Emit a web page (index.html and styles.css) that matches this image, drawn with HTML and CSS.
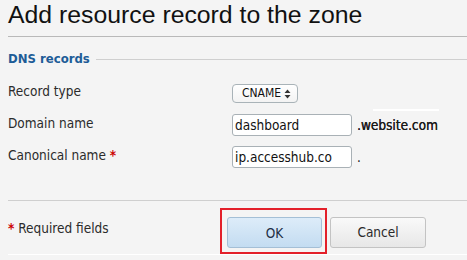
FILE: index.html
```html
<!DOCTYPE html>
<html>
<head>
<meta charset="utf-8">
<link rel="stylesheet" href="styles.css">
</head>
<body>
<div class="dialog">
  <h1 class="title">Add resource record to the zone</h1>
  <div class="section-head">
    <span class="section-title">DNS records</span>
    <span class="section-rule"></span>
  </div>
  <div class="form">
    <div class="row">
      <label class="label">Record type</label>
      <div class="control">
        <span class="select">CNAME
          <svg class="arrows" width="7" height="10" viewBox="0 0 7 10"><path d="M3.5 0.5 L6.5 4 L0.5 4 Z M3.5 9.5 L6.5 6 L0.5 6 Z" fill="#333"/></svg>
        </span>
      </div>
    </div>
    <div class="row">
      <label class="label">Domain name</label>
      <div class="control">
        <span class="input">dashboard</span>
        <span class="suffix suffix-domain">.website.com</span>
      </div>
    </div>
    <div class="row">
      <label class="label">Canonical name <span class="req">*</span></label>
      <div class="control">
        <span class="input">ip.accesshub.co</span>
        <span class="suffix">.</span>
      </div>
    </div>
  </div>
  <div class="footer">
    <div class="required"><span class="req">*</span> Required fields</div>
    <div class="highlight"><button class="btn btn-primary">OK</button></div>
    <button class="btn btn-secondary">Cancel</button>
  </div>
</div>
</body>
</html>
```

FILE: styles.css
```css
html, body {
  margin: 0;
  padding: 0;
  background: #f4f4f4;
  width: 467px;
  height: 260px;
  overflow: hidden;
}
body {
  font-family: "DejaVu Sans Condensed", "DejaVu Sans", sans-serif;
  font-size: 13.5px;
  color: #2b2b2b;
}
.dialog {
  padding-left: 8px;
}
.title {
  margin: 0;
  padding: 0 0 6px 0;
  font-family: "Liberation Sans", Arial, sans-serif;
  font-weight: normal;
  font-size: 24.8px;
  line-height: 30px;
  color: #111;
  border-bottom: 1px solid #b9b9b9;
}
.section-head {
  display: flex;
  align-items: center;
  height: 16px;
  margin-top: 13px;
}
.section-title {
  color: #1d5c97;
  font-weight: bold;
  font-size: 13px;
  white-space: nowrap;
}
.section-rule {
  flex: 1;
  height: 1px;
  background: #cfcfcf;
  margin-left: 6px;
  margin-top: 2px;
}
.form {
  margin-top: 11px;
}
.row {
  display: grid;
  grid-template-columns: 224px 1fr;
  align-items: center;
  height: 32px;
}
.label {
  padding-bottom: 4px;
  color: #2b2b2b;
}
.req {
  color: #c00;
  font-weight: bold;
}
.control {
  display: flex;
  align-items: center;
}
.select {
  display: inline-flex;
  align-items: center;
  gap: 3px;
  box-sizing: border-box;
  height: 19px;
  width: 66px;
  padding-left: 9px;
  border: 1px solid #a9b3b8;
  border-radius: 4px;
  background: linear-gradient(#ffffff, #f3f3f3);
  font-size: 12px;
  color: #111;
}
.arrows {
  margin-top: 1px;
}
.input {
  display: inline-flex;
  align-items: center;
  box-sizing: border-box;
  width: 120px;
  height: 22px;
  padding-left: 2px;
  border: 1px solid #a9b1b6;
  border-radius: 3px;
  background: #fff;
  color: #111;
  font-size: 13.5px;
}
.suffix {
  margin-left: 5px;
  color: #1a1a1a;
  font-size: 13.5px;
}
.suffix-domain {
  position: relative;
  text-shadow: 0.3px 0 0 #1a1a1a;
}
.suffix-domain::before {
  content: "";
  position: absolute;
  left: 16px;
  top: -8px;
  width: 66px;
  height: 2px;
  background: #fff;
}
.footer {
  display: flex;
  align-items: center;
  margin-top: 27px;
  border-top: 1px solid #cfcfcf;
  box-shadow: 0 1px 0 #fff;
  padding-top: 7px;
}
.required {
  width: 212px;
  padding-bottom: 6px;
}
.highlight {
  box-sizing: border-box;
  width: 107px;
  height: 46px;
  border: 2px solid #e3202a;
  padding: 7px 3px 4px 5px;
  display: flex;
}
.btn {
  box-sizing: border-box;
  width: 95px;
  height: 31px;
  border-radius: 3px;
  font-family: "DejaVu Sans Condensed", "DejaVu Sans", sans-serif;
  font-size: 13.5px;
  color: #1e2f45;
  padding: 0;
}
.btn-primary {
  border: 1px solid #a4bfd6;
  background: linear-gradient(#ddecf9, #c3dcf1);
}
.btn-secondary {
  margin-left: 3px;
  margin-top: 2px;
  width: 96px;
  border: 1px solid #c3c3c3;
  background: linear-gradient(#f9f9f9, #e7e7e7);
  color: #2a2a2a;
}
```
